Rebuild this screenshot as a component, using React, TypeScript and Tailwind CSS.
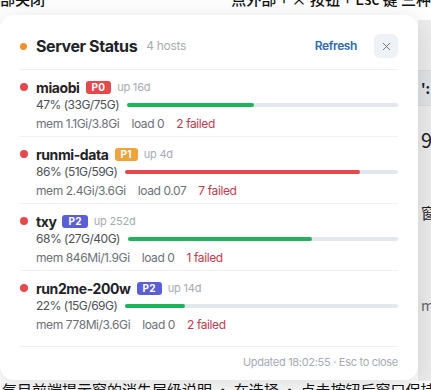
import React from "react";
import { X } from "lucide-react";

type Host = {
  name: string;
  prio: "P0" | "P1" | "P2";
  up: string;
  pct: number;
  disk: string;
  mem: string;
  load: string;
  failed: number;
};

const hosts: Host[] = [
  { name: "miaobi", prio: "P0", up: "up 16d", pct: 47, disk: "33G/75G", mem: "1.1Gi/3.8Gi", load: "0", failed: 2 },
  { name: "runmi-data", prio: "P1", up: "up 4d", pct: 86, disk: "51G/59G", mem: "2.4Gi/3.6Gi", load: "0.07", failed: 7 },
  { name: "txy", prio: "P2", up: "up 252d", pct: 68, disk: "27G/40G", mem: "846Mi/1.9Gi", load: "0", failed: 1 },
  { name: "run2me-200w", prio: "P2", up: "up 14d", pct: 22, disk: "15G/69G", mem: "778Mi/3.6Gi", load: "0", failed: 2 },
];

function Badge({ p }: { p: Host["prio"] }) {
  const cls =
    p === "P0" ? "bg-[#e5484d]" : p === "P1" ? "bg-[#f0a23b]" : "bg-[#5b5fd6]";
  return (
    <span
      className={`${cls} inline-flex h-[13px] items-center rounded-[3px] px-[6px] text-[10px] font-bold leading-none tracking-[0.2px] text-white`}
    >
      {p}
    </span>
  );
}

function Row({ h, last }: { h: Host; last: boolean }) {
  return (
    <div className={`flex pt-2 pb-1 ${last ? "" : "border-b border-[#eff1f4]"}`}>
      <div className="w-4 shrink-0">
        <div className="flex h-[18px] items-center">
          <span className="h-2 w-2 rounded-full bg-[#e5484d]" />
        </div>
      </div>
      <div className="flex min-w-0 flex-1 flex-col">
        <div className="flex h-[18px] items-center gap-[6px]">
          <span className="text-[14px] font-bold tracking-[-0.4px] text-[#1f2328]">{h.name}</span>
          <Badge p={h.prio} />
          <span className="text-[11px] tracking-[-0.2px] text-[#a6abb3]">{h.up}</span>
        </div>
        <div className="flex h-[17px] items-center gap-2">
          <span className="text-[12px] tracking-[-0.5px] text-[#4b5058]">
            {h.pct}% ({h.disk})
          </span>
          <div className="h-[4px] flex-1 rounded-full bg-[#e3e8ee]">
            <div
              className={`h-full rounded-full ${h.pct > 80 ? "bg-[#e5484d]" : "bg-[#1fb35b]"}`}
              style={{ width: `${h.pct}%` }}
            />
          </div>
        </div>
        <div className="mt-[2px] flex h-[17px] items-center gap-3 text-[12px] tracking-[-0.4px] text-[#6b7079]">
          <span>mem {h.mem}</span>
          <span>load {h.load}</span>
          <span className="text-[#c43a4b]">{h.failed} failed</span>
        </div>
      </div>
    </div>
  );
}

export default function App() {
  return (
    <div
      className="relative h-[390px] w-[431px] overflow-hidden bg-white"
      style={{ fontFamily: "Inter, 'Noto Sans CJK SC', sans-serif" }}
    >
      {/* page behind the popover */}
      <div className="flex h-full flex-col">
        <div className="h-[20px] overflow-hidden bg-white">
          <div className="-mt-[12px] flex text-[15px] font-medium text-[#111]" style={{ fontFamily: "'Noto Sans CJK SC', sans-serif" }}>
            <span className="w-[235px]">部关闭</span>
            <span className="whitespace-nowrap">点外部 + × 按钮 + Esc 键 三种</span>
          </div>
        </div>
        <div className="flex flex-1">
          <div className="flex-1" />
          <div className="flex w-[13px] flex-col bg-[#ededed] text-[#222]" style={{ fontFamily: "'Noto Sans CJK SC', sans-serif" }}>
            <div className="mt-[50px] flex h-[36px] items-center border-y border-[#dcdcdc] bg-[#e2e4e7] pl-[3px] text-[14px] font-bold">':</div>
            <div className="mt-[22px] whitespace-nowrap pl-[3px] text-[20px] leading-[24px]">99</div>
            <div className="mt-[50px] whitespace-nowrap pl-[3px] text-[15px]">窗</div>
            <div className="mt-[70px] whitespace-nowrap pl-[3px] text-[14px] text-[#666]">mp</div>
          </div>
        </div>
        <div className="h-[9px] overflow-hidden bg-white">
          <div className="whitespace-nowrap pl-[2px] text-[15px] leading-[18px] text-[#111]" style={{ fontFamily: "'Noto Sans CJK SC', sans-serif" }}>
            气目前端提示窗的消失层级说明 · 在选择 · 点击按钮后窗口保持打开后窗口后续弹
          </div>
        </div>
      </div>

      {/* popover */}
      <div className="absolute left-0 top-[15px] w-[418px] rounded-[14px] bg-white shadow-[0_6px_28px_rgba(0,0,0,0.14)]">
        <div className="mx-5 flex items-center border-b border-[#eff1f4] pt-[19px] pb-[11px]">
          <div className="w-4 shrink-0">
            <span className="block h-[7px] w-[7px] rounded-full bg-[#f0922b]" />
          </div>
          <span className="text-[16px] font-bold tracking-[-0.4px] text-[#1f2328]">Server Status</span>
          <span className="ml-[9px] text-[12px] tracking-[-0.3px] text-[#a6abb3]">4 hosts</span>
          <div className="flex-1" />
          <span className="text-[12px] font-semibold tracking-[-0.4px] text-[#2e6aae]">Refresh</span>
          <button className="ml-[17px] flex h-6 w-6 items-center justify-center rounded-md bg-[#eef2f6] text-[#6b7079]">
            <X size={13} strokeWidth={1.75} />
          </button>
        </div>
        <div className="mx-5 pb-[9px]">
          {hosts.map((h, i) => (
            <Row key={h.name} h={h} last={i === hosts.length - 1} />
          ))}
        </div>
        <div className="mx-5 flex justify-end border-t border-[#eff1f4] pt-2 pb-[11px] text-[11px] leading-[14px] tracking-[-0.3px] text-[#a6abb3]">
          Updated 18:02:55 · Esc to close
        </div>
      </div>
    </div>
  );
}
